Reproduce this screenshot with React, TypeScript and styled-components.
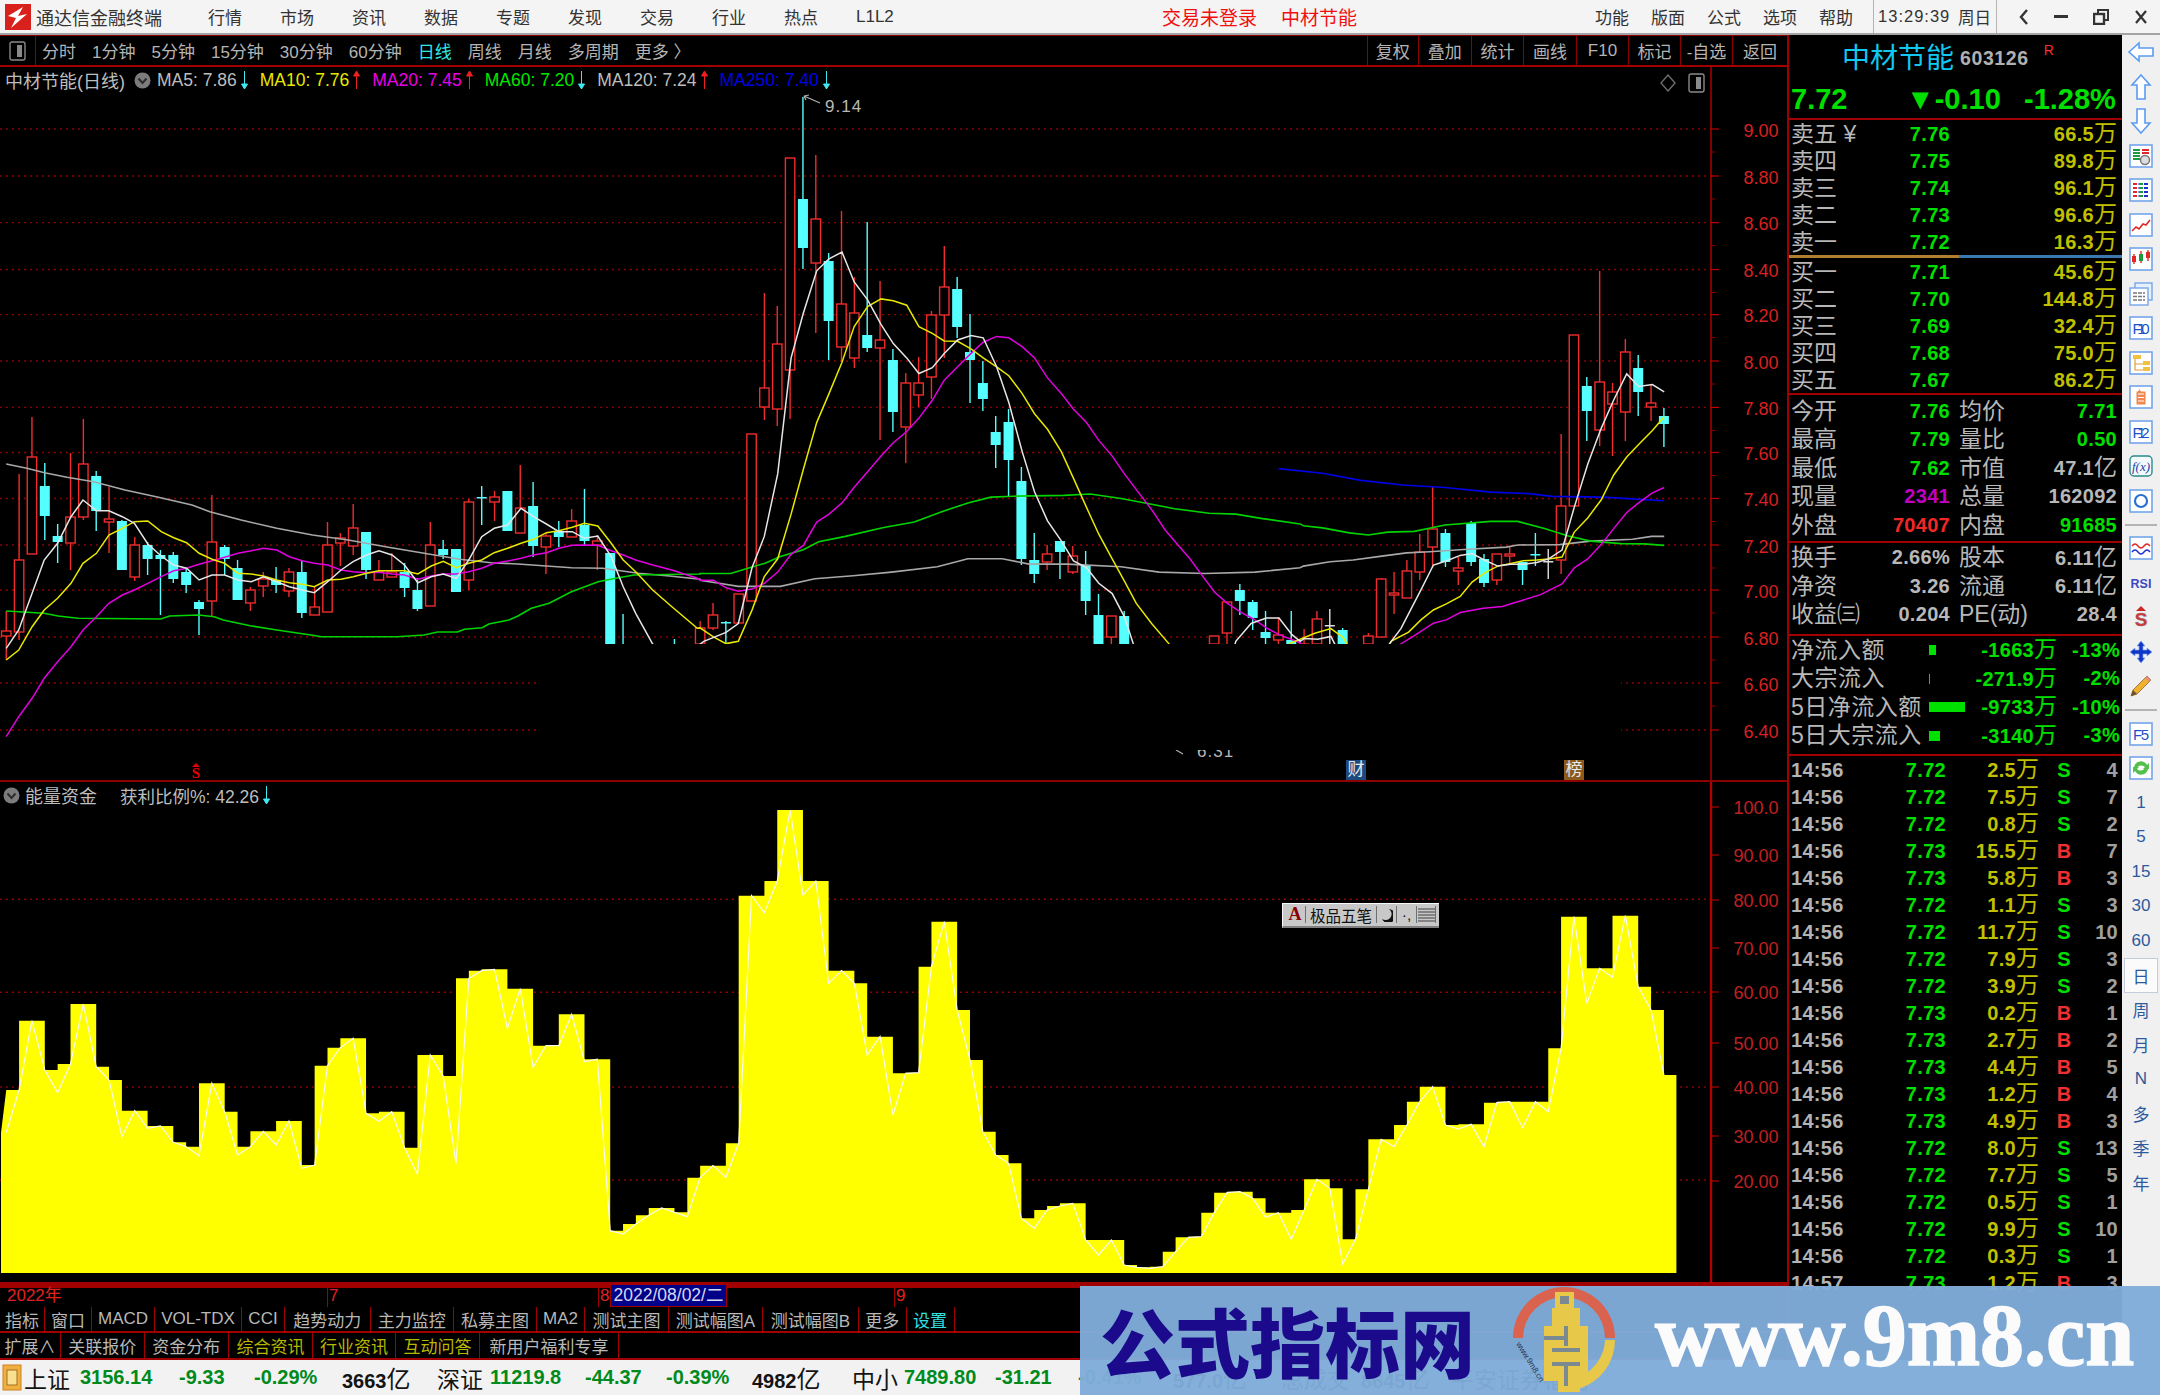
import styled, { createGlobalStyle } from 'styled-components';

const GlobalStyle = createGlobalStyle`
  html, body { margin: 0; padding: 0; background: #000; }
  * { box-sizing: border-box; }
  body { font-family: "Liberation Sans", "Noto Sans CJK SC", sans-serif; }
`;

const CJK = '"Liberation Sans", "Noto Sans CJK SC", sans-serif';

const Page = styled.div`
  position: relative;
  width: 2160px;
  height: 1395px;
  overflow: hidden;
  display: flex;
  flex-direction: column;
  background: #000;
  font-family: ${CJK};
`;

/* ---------- title bar ---------- */
const TitleBar = styled.div`
  height: 35px;
  flex: none;
  display: flex;
  align-items: center;
  background: #f4f4f4;
  border-bottom: 2px solid #a4a4a4;
  color: #333;
  font-size: 17px;
`;
const Brand = styled.span`
  font-size: 18px;
  margin-left: 5px;
  width: 172px;
`;
const MenuItem = styled.span`
  width: 72px;
  flex: none;
`;
const AlertText = styled.span<{ $ml: number }>`
  color: #f01010;
  font-size: 19px;
  margin-left: ${(p) => p.$ml}px;
`;
const RightMenu = styled.div`
  display: flex;
  gap: 22px;
  margin-left: 238px;
`;
const ClockCell = styled.div`
  width: 124px;
  height: 33px;
  margin-left: 20px;
  display: flex;
  align-items: center;
  justify-content: space-between;
  padding: 0 5px 0 4px;
  border-left: 1px solid #b4b4b4;
  border-right: 1px solid #b4b4b4;
  font-size: 16.5px;
`;
const ClockTime = styled.span`
  letter-spacing: 1px;
`;
const WinControls = styled.div`
  flex: 1;
  display: flex;
  align-items: center;
  justify-content: space-between;
  padding: 0 12px 0 22px;
`;

/* ---------- layout ---------- */
const Body = styled.div`
  flex: 1;
  min-height: 0;
  display: flex;
`;
const LeftCol = styled.div`
  width: 1787px;
  flex: none;
  display: flex;
  flex-direction: column;
`;
const Toolbar = styled.div`
  height: 32px;
  flex: none;
  display: flex;
  align-items: center;
  border-top: 1px solid #8b0000;
  border-bottom: 2px solid #a00000;
  color: #b4b4b4;
  font-size: 17px;
`;
const ToolIconCell = styled.div`
  width: 36px;
  height: 100%;
  flex: none;
  display: flex;
  align-items: center;
  justify-content: center;
  border-right: 1px solid #8b0000;
  margin-right: 6px;
`;
const PeriodList = styled.div`
  display: flex;
  gap: 16px;
`;
const Period = styled.span<{ $on?: boolean }>`
  color: ${(p) => (p.$on ? '#30e8e8' : '#b4b4b4')};
`;
const ToolRight = styled.div`
  margin-left: auto;
  height: 100%;
  display: flex;
`;
const ToolCell = styled.div<{ $w: number }>`
  width: ${(p) => p.$w}px;
  display: flex;
  align-items: center;
  justify-content: center;
  border-left: 1px solid #8b0000;
`;

const MainPane = styled.div`
  position: relative;
  height: 715px;
  flex: none;
  border-bottom: 2px solid #8b0000;
`;
const SubPane = styled.div`
  position: relative;
  height: 500px;
  flex: none;
`;
const ChartSvg = styled.svg`
  display: block;
`;
const Legend = styled.div`
  position: absolute;
  left: 5px;
  top: 3px;
  display: flex;
  align-items: center;
  height: 20px;
  font-size: 17.5px;
  color: #bdbdbd;
`;
const LegendName = styled.span<{ $w: number }>`
  width: ${(p) => p.$w}px;
  flex: none;
  font-size: 18px;
  white-space: nowrap;
`;
const LegendChevron = styled.span<{ $w: number; $ml?: number }>`
  display: flex;
  flex: none;
  width: ${(p) => p.$w}px;
  margin-left: ${(p) => p.$ml ?? 0}px;
`;
const LegendItem = styled.span<{ $c: string }>`
  display: flex;
  align-items: center;
  gap: 4px;
  margin-right: 12px;
  color: ${(p) => p.$c};
  white-space: pre;
`;
const CornerTools = styled.div`
  position: absolute;
  left: 1660px;
  top: 6px;
  display: flex;
  align-items: center;
  gap: 12px;
`;
const Badge = styled.span<{ $x: number; $bg: string }>`
  position: absolute;
  left: ${(p) => p.$x}px;
  top: 693px;
  width: 20px;
  height: 20px;
  background: ${(p) => p.$bg};
  color: #e8e8e8;
  font-size: 17px;
  line-height: 20px;
  text-align: center;
`;
const SplitMark = styled.span`
  position: absolute;
  left: 189px;
  top: 700px;
  width: 14px;
  height: 12px;
  font-family: "Liberation Serif", serif;
  font-size: 15px;
  font-weight: 700;
  line-height: 12px;
  text-align: center;
  color: #e80000;
`;
const ImeBar = styled.div`
  position: absolute;
  left: 1282px;
  top: 121px;
  width: 157px;
  height: 25px;
  display: flex;
  align-items: stretch;
  padding: 2px 2px 3px;
  background: #c8c8c8;
  border-top: 1px solid #f8f8f8;
  border-left: 1px solid #f8f8f8;
  border-bottom: 2px solid #808080;
  color: #111;
`;
const ImeBtn = styled.span<{ $w: number; $c?: string; $serif?: boolean }>`
  width: ${(p) => p.$w}px;
  flex: none;
  display: flex;
  align-items: center;
  justify-content: center;
  border-right: 1px solid #707070;
  font-family: ${(p) => (p.$serif ? '"Liberation Serif", serif' : 'inherit')};
  font-weight: ${(p) => (p.$serif ? 700 : 400)};
  font-size: ${(p) => (p.$serif ? 18 : 15.5)}px;
  color: ${(p) => p.$c || '#111'};
  white-space: nowrap;
`;

/* ---------- bottom rows ---------- */
const TimeAxis = styled.div`
  height: 25px;
  flex: none;
  display: flex;
  align-items: stretch;
  border-top: 2px solid #a00000;
  color: #e02020;
  font-size: 17px;
  background-image: linear-gradient(#a00000, #a00000);
  background-size: 1px 4px;
  background-repeat: repeat-x;
`;
const AxisCell = styled.span<{ $w: number; $mark?: boolean; $pad?: number }>`
  width: ${(p) => p.$w}px;
  flex: none;
  padding-left: ${(p) => p.$pad ?? 1}px;
  border-left: ${(p) => (p.$mark ? '1px solid #a00000' : 'none')};
  line-height: 23px;
`;
const AxisCursor = styled.span`
  width: 117px;
  flex: none;
  background: #000088;
  border: 1px solid #a00000;
  color: #d8d8f0;
  line-height: 21px;
  text-align: center;
  font-size: 17.5px;
  white-space: nowrap;
`;
const BarRow = styled.div<{ $h: number }>`
  height: ${(p) => p.$h}px;
  flex: none;
  display: flex;
  border-bottom: 2px solid #a00000;
  font-size: 17px;
`;
const BarCell = styled.span<{ $w: number; $c?: string }>`
  width: ${(p) => p.$w}px;
  flex: none;
  display: flex;
  align-items: center;
  justify-content: center;
  border-right: 1px solid #a00000;
  color: ${(p) => p.$c || '#b8b8b8'};
  white-space: nowrap;
`;

/* ---------- quote panel ---------- */
const QuotePanel = styled.div`
  width: 335px;
  flex: none;
  overflow: hidden;
  border-left: 2px solid #a00000;
  color: #b8b8b8;
`;
const NameRow = styled.div`
  height: 45px;
  display: flex;
  align-items: center;
  padding-left: 53px;
`;
const StockName = styled.span`
  font-size: 28px;
  color: #10c8f0;
  margin-top: -4px;
`;
const StockCode = styled.span`
  font-size: 19.5px;
  font-weight: 700;
  letter-spacing: 0.6px;
  color: #b0b0b0;
  margin: 2px 0 0 6px;
`;
const StockFlag = styled.span`
  font-size: 14px;
  color: #f03030;
  margin: -16px 0 0 15px;
`;
const PriceRow = styled.div`
  height: 40px;
  display: flex;
  align-items: center;
  padding-left: 2px;
  border-bottom: 2px solid #a00000;
  color: #00e000;
  font-size: 29px;
  font-weight: 700;
`;
const PriceNow = styled.span<{ $w: number }>`
  width: ${(p) => p.$w}px;
  flex: none;
  white-space: nowrap;
`;
const Book = styled.div`
  padding-left: 2px;
`;
const QuoteRow = styled.div`
  height: 27px;
  display: grid;
  grid-template-columns: 100px 59px 167px;
  align-items: center;
`;
const Label = styled.span`
  font-size: 23px;
  line-height: 27px;
  white-space: pre;
  color: #b8b8b8;
`;
const Num = styled.span<{ $c?: string }>`
  font-size: 20px;
  font-weight: 700;
  line-height: 27px;
  letter-spacing: 0.3px;
  text-align: right;
  white-space: nowrap;
  color: ${(p) => p.$c || '#00e000'};
`;
const Unit = styled.span`
  font-size: 23px;
  font-weight: 400;
  letter-spacing: 0;
`;
const SplitLine = styled.div`
  height: 3px;
  background: linear-gradient(90deg, #b08030 0 170px, #3a78b0 170px);
`;
const Section = styled.div<{ $pt?: number; $pb?: number }>`
  padding: ${(p) => p.$pt ?? 0}px 0 ${(p) => p.$pb ?? 0}px 2px;
  border-top: 2px solid #a00000;
`;
const InfoRow = styled.div`
  height: 28.5px;
  display: grid;
  grid-template-columns: 100px 59px 69px 98px;
  align-items: center;
`;
const InfoLabel = styled(Label)`
  margin-left: 9px;
`;
const FlowRow = styled.div`
  height: 28.5px;
  display: grid;
  grid-template-columns: 138px 40px 88px 63px;
  align-items: center;
`;
const FlowLabel = styled(Label)`
  letter-spacing: 0.5px;
`;
const FlowBar = styled.span<{ $w: number }>`
  display: block;
  height: 10px;
  width: ${(p) => p.$w}px;
  background: #00e000;
`;
const TickRow = styled.div`
  height: 27px;
  display: grid;
  grid-template-columns: 60px 95px 93px 50px 29px;
  align-items: center;
`;
const TickTime = styled(Num)`
  text-align: left;
  color: #b4b4b4;
`;
const TickFlag = styled(Num)`
  text-align: center;
`;

/* ---------- side rail ---------- */
const Rail = styled.div`
  flex: 1;
  background: #f0f0f0;
  display: flex;
  flex-direction: column;
  align-items: center;
`;
const RailSlot = styled.div<{ $boxed?: boolean }>`
  height: 34.5px;
  width: 34px;
  flex: none;
  display: flex;
  align-items: center;
  justify-content: center;
  color: #2c5a9c;
  font-size: 17px;
  background: ${(p) => (p.$boxed ? '#fbfbfb' : 'transparent')};
  border: ${(p) => (p.$boxed ? '1px solid #c4ccdc' : 'none')};
`;
const RailRule = styled.div`
  width: 32px;
  height: 13px;
  flex: none;
  background: linear-gradient(#b4b4b4, #b4b4b4) center / 100% 2px no-repeat;
`;

/* ---------- status bar ---------- */
const StatusBar = styled.div`
  height: 35px;
  flex: none;
  display: flex;
  align-items: center;
  padding-left: 2px;
  background: #f2f2f2;
  color: #111;
  white-space: nowrap;
`;
const StatusIcon = styled.svg`
  flex: none;
  margin-right: 2px;
`;
const StatusCell = styled.span<{ $w: number; $k?: 'name' | 'num' | 'amt' }>`
  width: ${(p) => p.$w}px;
  flex: none;
  font-size: ${(p) => (p.$k === 'name' ? 23 : 20)}px;
  font-weight: ${(p) => (p.$k === 'name' ? 400 : 700)};
  color: ${(p) => (p.$k === 'num' ? '#008a1c' : '#141414')};
`;
const StatusUnit = styled.span`
  font-size: 24px;
  font-weight: 400;
`;

/* ---------- watermark band ---------- */
const Band = styled.div`
  position: absolute;
  left: 1080px;
  right: 0;
  top: 1286px;
  bottom: 0;
  display: flex;
  align-items: center;
  background: rgba(128, 172, 217, 0.965);
`;
const BandTitle = styled.span`
  margin-left: 20px;
  width: 384px;
  flex: none;
  font-family: "Noto Sans CJK SC", sans-serif;
  font-size: 75px;
  font-weight: 900;
  line-height: 1;
  color: #1b0a8c;
  margin-top: -2px;
`;
const BandLogoSvg = styled.svg`
  margin-left: 24px;
  flex: none;
`;
const BandUrl = styled.span`
  margin-left: 35px;
  font-family: "Liberation Serif", serif;
  font-weight: 700;
  font-size: 88px;
  line-height: 1;
  color: #fbfbfb;
  -webkit-text-stroke: 1.5px #fbfbfb;
  margin-top: -10px;
  white-space: nowrap;
`;

/* ---------- data ---------- */
type P = [number, number];
const scale = (a: number[], sx: number, sy: number, x0: number, y0: number): P[] => {
  const out: P[] = [];
  for (let i = 0; i < a.length; i += 2) out.push([x0 + a[i] / sx, y0 + a[i + 1] / sy]);
  return out;
};
const c7 = (a: number[]) => scale(a, 2.24, 3, 0, 400);
const c8 = (a: number[]) => scale(a, 2.613, 2.24, 700, 90);
const c9 = (a: number[]) => scale(a, 2.613, 2.8, 1200, 250);
const merge = (...parts: P[][]) => {
  const out: P[] = [];
  parts.flat().forEach((p) => {
    if (!out.length || p[0] > out[out.length - 1][0]) out.push(p);
  });
  return out.map((p) => `${p[0].toFixed(1)},${p[1].toFixed(1)}`).join(' ');
};

const MA5 = merge(
  c7([14,745,42,690,72,580,99,480,129,430,159,350,186,300,216,332,244,332,274,350,301,370,331,432,361,468,389,495,418,505,446,540,475,525,503,525,533,540,563,545,590,530,620,545,648,560,677,570,704,578,734,545,764,510,791,485,821,465,849,452,878,465,906,495,936,548,966,530,993,522,1022,535,1050,480,1079,410,1107,385,1137,375,1167,325,1195,350,1224,372,1252,395,1282,395,1309,415,1339,408,1369,470,1396,560,1424,640,1462,732,1500,800]),
  c8([10,1235,68,1215,100,1195,136,1070,168,1000,203,860,238,600,270,500,305,405,337,378,371,363,403,430,438,470,473,525,505,568,540,600,572,635,607,622,638,590,673,560,708,550,740,555,775,620,807,700,842,810,874,900,908,965,944,1010,976,1055,1010,1070,1042,1105,1077,1128,1109,1180,1132,1240,1160,1300,1380,1300,1400,1235,1440,1195,1480,1183,1513,1183,1547,1220,1568,1235]),
  c9([272,1088,307,1090,342,1082,374,1150,480,1150,495,1103,525,1060,578,950,610,882,645,870,680,855,711,850,743,868,778,885,812,880,845,880,880,875,911,865,946,840,978,720,1013,600,1048,500,1081,420,1115,347,1146,382,1182,377,1213,397]),
);
const MA10 = merge(
  c7([14,780,42,750,72,680,99,630,129,595,159,550,186,490,216,460,244,405,274,385,301,365,331,363,361,395,389,413,418,428,446,460,475,478,503,490,533,520,563,522,590,528,620,540,648,548,677,553,704,560,734,540,764,538,791,530,821,520,849,512,878,512,906,512,936,522,966,498,993,484,1022,503,1050,490,1079,480,1107,458,1137,445,1167,430,1195,418,1224,398,1252,392,1282,382,1309,370,1339,378,1369,430,1396,480,1424,515,1462,570,1505,620,1562,685]),
  c8([0,1205,35,1225,68,1240,100,1235,136,1165,168,1090,203,1050,238,950,270,850,305,745,337,680,371,610,403,530,438,485,473,468,505,472,540,482,572,530,607,545,638,562,673,563,708,580,740,600,775,620,807,640,842,680,874,725,908,760,944,810,976,870,1010,935,1042,995,1077,1050,1109,1100,1140,1150,1180,1195,1225,1240,1260,1290,1500,1290,1540,1240]),
  c9([300,1073,342,1060,374,1085,410,1150,470,1150,500,1095,545,1070,578,1035,610,1008,645,990,680,970,711,930,743,905,778,885,812,878,845,870,880,868,911,865,946,860,978,790,1013,750,1048,700,1081,630,1115,580,1146,545,1182,505,1213,467]),
);
const MA20 = merge(
  c7([14,1010,42,950,72,895,99,835,129,785,159,740,186,690,216,650,244,610,274,585,301,570,331,550,361,530,389,512,418,505,446,493,475,482,503,472,533,460,563,452,590,445,620,450,648,470,677,482,704,490,734,495,764,510,791,515,821,518,849,517,878,522,906,525,936,538,966,528,993,522,1022,522,1050,515,1079,505,1107,490,1137,483,1167,475,1195,465,1224,458,1252,445,1282,436,1309,435,1339,436,1369,452,1396,465,1424,480,1462,495,1505,510,1562,535]),
  c8([0,1098,35,1098,68,1115,100,1123,136,1118,168,1105,203,1080,238,1040,270,1020,305,968,337,950,371,925,403,890,438,855,473,820,505,790,540,765,572,735,607,695,638,650,673,620,708,590,740,565,775,552,807,555,842,575,874,600,908,645,944,680,976,715,1010,745,1042,785,1077,820,1109,860,1140,895,1180,940,1215,985,1250,1020,1280,1050,1310,1085,1345,1125,1378,1150,1414,1170,1446,1185,1480,1205,1513,1220,1568,1238]),
  c9([280,1150,510,1150,525,1103,560,1080,610,1045,645,1035,680,1015,740,1003,790,998,845,980,890,965,946,935,978,890,1013,865,1048,825,1081,780,1115,735,1146,708,1182,680,1213,665]),
);
const MA60 = merge(
  c7([14,633,99,640,130,648,175,655,360,657,380,648,445,645,480,650,500,660,560,677,620,690,700,706,720,710,890,710,950,705,980,696,1025,696,1040,688,1080,683,1095,672,1140,660,1160,648,1190,625,1230,610,1280,575,1340,545,1370,537,1420,525,1568,522]),
  c8([0,1083,80,1083,110,1075,170,1060,210,1045,270,1030,310,1012,380,1000,480,980,560,968,630,945,700,925,760,912,820,910,950,908,1020,905,1100,915,1180,928,1240,938,1330,948,1400,950,1470,960,1568,972]),
  c9([270,772,320,778,390,792,440,798,490,790,560,788,640,770,760,760,830,760,900,780,960,800,1020,815,1100,822,1160,823,1213,827]),
);
const MA120 = merge(
  c7([14,192,60,205,100,218,150,232,210,245,280,270,350,290,430,315,470,335,540,360,620,385,700,405,780,420,870,442,950,460,1030,478,1100,488,1160,492,1280,503,1350,505,1430,520,1500,528,1568,538]),
  c8([0,1098,50,1105,100,1112,210,1112,300,1095,400,1088,500,1080,620,1068,700,1050,790,1050,860,1062,960,1062,1100,1068,1200,1080,1320,1083,1450,1080,1568,1070]),
  c9([270,885,340,873,400,868,470,858,540,848,600,845,700,838,800,832,830,826,940,825,1020,815,1130,810,1180,802,1213,802]),
);
const MA250 = merge(c9([205,612,320,625,420,645,530,658,640,665,760,678,860,682,920,690,1050,692,1130,697,1213,702]));

// i, kind, wick top, wick bottom, body top, body bottom (page pixels)
type K = [number, 'r' | 'c' | 'w', number, number, number, number];
const CANDLES: K[] = [
  [0,'r',611,660,631,636],[1,'r',474,640,560,632],[2,'r',417,554,457,554],[3,'c',463,540,486,516],[4,'c',524,563,536,542],
  [5,'r',453,570,517,543],[6,'r',419,520,464,517],[7,'c',471,531,476,511],[8,'r',487,553,519,522],[9,'c',520,570,521,570],
  [10,'r',537,581,545,577],[11,'c',542,575,545,559],[12,'c',550,615,555,559],[13,'c',552,583,555,579],[14,'c',568,593,572,585],
  [15,'c',600,635,602,609],[16,'r',495,617,542,601],[17,'c',545,575,547,559],[18,'c',560,600,568,600],[19,'r',587,611,590,603],
  [20,'r',572,597,579,586],[21,'c',567,593,580,585],[22,'r',568,597,572,591],[23,'c',561,618,572,613],[24,'r',587,615,607,615],
  [25,'r',522,612,545,612],[26,'r',533,566,538,543],[27,'r',504,555,528,546],[28,'c',532,579,532,570],[29,'r',560,580,572,580],
  [30,'r',553,577,572,577],[31,'c',563,597,572,588],[32,'c',578,611,590,609],[33,'r',522,606,545,606],[34,'c',540,559,549,555],
  [35,'c',549,592,549,592],[36,'r',499,590,502,580],[37,'c',486,525,497,498],[38,'r',491,521,497,502],[39,'c',491,531,491,531],
  [40,'r',465,533,508,533],[41,'c',482,557,506,546],[42,'r',533,574,536,547],[43,'c',521,547,532,537],[44,'r',509,537,521,537],
  [45,'c',489,545,525,541],[46,'r',535,570,541,545],[47,'c',553,644,553,644],[48,'c',614,644,644,644],[52,'c',639,644,644,644],
  [54,'r',621,644,628,644],[55,'r',603,630,615,628],[56,'c',621,644,622,623],[57,'r',594,623,594,623],[58,'r',434,601,434,601],
  [59,'r',293,420,388,407],[60,'r',306,426,344,409],[61,'r',158,419,158,370],[62,'c',97,269,199,248],[63,'r',155,333,219,263],
  [64,'c',253,360,261,321],[65,'r',211,362,304,347],[66,'r',277,368,313,358],[67,'c',222,352,335,348],[68,'r',281,440,340,348],
  [69,'c',349,432,360,412],[70,'r',373,463,383,427],[71,'r',357,407,383,395],[72,'r',311,399,315,377],[73,'r',246,358,287,315],
  [74,'c',277,338,289,327],[75,'c',314,403,352,360],[76,'c',361,411,383,399],[77,'c',416,468,432,445],[78,'c',409,497,422,460],
  [79,'c',467,565,481,559],[80,'c',533,583,560,574],[81,'r',545,570,554,562],[82,'c',541,579,541,552],[83,'r',546,574,556,572],
  [84,'c',551,615,565,601],[85,'c',594,644,615,644],[86,'r',616,644,616,637],[87,'c',611,644,616,644],[94,'r',636,644,636,644],
  [95,'r',602,644,602,633],[96,'c',584,615,590,601],[97,'c',600,630,602,618],[98,'c',611,644,632,638],[99,'r',617,644,635,640],
  [100,'c',611,644,640,644],[101,'r',629,644,644,644],[102,'r',611,644,619,644],[103,'w',609,644,625,625],[104,'c',628,644,630,644],
  [106,'r',633,644,636,644],[107,'r',578,637,579,637],[108,'r',572,614,593,595],[109,'r',560,598,571,598],[110,'r',534,580,552,572],
  [111,'r',487,568,529,547],[112,'c',529,567,533,562],[113,'r',557,585,568,571],[114,'c',521,566,523,562],[115,'c',554,587,559,583],
  [116,'r',554,585,554,580],[117,'r',546,564,554,556],[118,'c',562,585,562,570],[119,'c',533,566,554,555],[120,'w',549,579,561,561],
  [121,'r',434,574,506,560],[122,'r',335,506,335,506],[123,'c',377,441,386,411],[124,'r',271,446,382,430],[125,'r',383,456,392,404],
  [126,'r',339,441,352,412],[127,'c',355,416,368,392],[128,'r',385,421,403,407],[129,'c',408,447,416,424],
];
const cx = (i: number) => 6.25 + i * 12.85;

const PRICE_TICKS: [string, number][] = [
  ['9.00',129],['8.80',176],['8.60',222.6],['8.40',269.5],['8.20',314.6],['8.00',361],['7.80',407.4],
  ['7.60',452.5],['7.40',498.5],['7.20',545],['7.00',590],['6.80',637],['6.60',683],['6.40',730],
];
const SUB_TICKS: [string, number][] = [
  ['100.0',807],['90.00',855],['80.00',900],['70.00',948],['60.00',992],['50.00',1043],['40.00',1087],['30.00',1136],['20.00',1181],
];

const ENERGY = [
  1058,930,722,870,938,852,672,860,900,1070,992,1045,1038,1087,1100,1127,910,995,1125,1100,1054,1095,1023,1165,1155,857,803,775,1000,1024,995,1103,1182,825,888,1150,595,572,568,745,626,862,797,797,703,845,838,1352,1362,1332,1306,1284,1297,1310,1193,1157,1192,1090,347,398,303,90,345,303,610,572,610,
  825,770,1005,880,878,560,425,690,840,1055,1125,1150,1315,1345,1290,1278,1270,1380,1425,1380,1455,1462,1465,1460,1415,1372,1370,1298,1238,1235,1255,1312,1298,1378,1290,1198,1225,1452,1378,1228,1078,1100,1035,965,920,1035,1047,1033,1100,968,965,1043,965,995,805,410,670,565,592,407,620,690,885,
].map((v) => 780 + v / 3);
const energyFill = () => {
  const pts: string[] = ['1,1273', `1,${ENERGY[0]}`];
  ENERGY.forEach((y, i) => {
    if (i === ENERGY.length - 1) return;
    const top = Math.min(y, ENERGY[i + 1]);
    pts.push(`${cx(i)},${top}`, `${cx(i + 1)},${top}`);
  });
  const last = ENERGY.length - 1;
  pts.push(`${cx(last)},${ENERGY[last]}`, `${cx(last) + 12.5},${ENERGY[last]}`, `${cx(last) + 12.5},1273`);
  return pts.join(' ');
};
const energyLine = ENERGY.map((y, i) => `${cx(i)},${y}`).join(' ');

const SELL: [string, string, string][] = [
  ['卖五 ¥','7.76','66.5'],['卖四','7.75','89.8'],['卖三','7.74','96.1'],['卖二','7.73','96.6'],['卖一','7.72','16.3'],
];
const BUY: [string, string, string][] = [
  ['买一','7.71','45.6'],['买二','7.70','144.8'],['买三','7.69','32.4'],['买四','7.68','75.0'],['买五','7.67','86.2'],
];
const GREEN = '#00e000';
const GREY = '#b8b8b8';
const INFO: [string, string, string, string, string, string, string?][] = [
  ['今开','7.76',GREEN,'均价','7.71',GREEN],
  ['最高','7.79',GREEN,'量比','0.50',GREEN],
  ['最低','7.62',GREEN,'市值','47.1',GREY,'亿'],
  ['现量','2341','#c000c0','总量','162092',GREY],
  ['外盘','70407','#f02828','内盘','91685',GREEN],
];
const INFO2: [string, string, string, string, string?][] = [
  ['换手','2.66%','股本','6.11','亿'],
  ['净资','3.26','流通','6.11','亿'],
  ['收益㈢','0.204','PE(动)','28.4'],
];
const FLOW: [string, number, string, string][] = [
  ['净流入额',6.5,'-1663','-13%'],
  ['大宗流入',1.3,'-271.9','-2%'],
  ['5日净流入额',36,'-9733','-10%'],
  ['5日大宗流入',10.5,'-3140','-3%'],
];
const TICKS: [string, string, string, string, string][] = [
  ['14:56','7.72','2.5','S','4'],['14:56','7.72','7.5','S','7'],['14:56','7.72','0.8','S','2'],['14:56','7.73','15.5','B','7'],
  ['14:56','7.73','5.8','B','3'],['14:56','7.72','1.1','S','3'],['14:56','7.72','11.7','S','10'],['14:56','7.72','7.9','S','3'],
  ['14:56','7.72','3.9','S','2'],['14:56','7.73','0.2','B','1'],['14:56','7.73','2.7','B','2'],['14:56','7.73','4.4','B','5'],
  ['14:56','7.73','1.2','B','4'],['14:56','7.73','4.9','B','3'],['14:56','7.72','8.0','S','13'],['14:56','7.72','7.7','S','5'],
  ['14:56','7.72','0.5','S','1'],['14:56','7.72','9.9','S','10'],['14:56','7.72','0.3','S','1'],['14:57','7.73','1.2','B','3'],
];
const PERIODS = ['分时','1分钟','5分钟','15分钟','30分钟','60分钟','日线','周线','月线','多周期','更多 〉'];
const TOOL_RIGHT: [string, number][] = [['复权',50.5],['叠加',53.5],['统计',52],['画线',53],['F10',52],['标记',52],['-自选',52],['返回',55]];
const ROW2: [string, number, string?][] = [
  ['指标',45],['窗口',47],['MACD',63],['VOL-TDX',87],['CCI',43],['趋势动力',85.5],['主力监控',83.5],['私募主图',83],['MA2',48],
  ['测试主图',84],['测试幅图A',94],['测试幅图B',96],['更多',47.5],['设置',48,'#30e0e0'],
];
const YEL = '#b8b800';
const ROW3: [string, number, string?][] = [
  ['扩展∧',61],['关联报价',83.6],['资金分布',84.4],['综合资讯',84,YEL],['行业资讯',83,YEL],['互动问答',84,YEL],['新用户福利专享',139],
];

/* ---------- small drawings ---------- */
const Arrow = ({ up }: { up?: boolean }) => (
  <svg width="7" height="20" viewBox="0 0 7 20">
    {up ? (
      <path d="M3.5 19V4M0.5 6L3.5 1L6.5 6Z" stroke="#f02020" strokeWidth="1" fill="#f02020" />
    ) : (
      <path d="M3.5 1V16M0.5 14L3.5 19L6.5 14Z" stroke="#40e8f0" strokeWidth="1" fill="#40e8f0" />
    )}
  </svg>
);
const Chevron = () => (
  <svg width="17" height="17" viewBox="0 0 17 17">
    <circle cx="8.5" cy="8.5" r="8" fill="#7c7c7c" />
    <path d="M4.5 6.5L8.5 11L12.5 6.5" fill="none" stroke="#2c2c2c" strokeWidth="2" />
  </svg>
);
const BoxIcon = () => (
  <svg width="17" height="20" viewBox="0 0 17 20">
    <rect x="1" y="1" width="15" height="18" rx="2" fill="none" stroke="#8a8a8a" strokeWidth="1.4" />
    <rect x="8" y="4" width="5" height="12" fill="#8a8a8a" />
  </svg>
);
const LogoSvg = styled.svg`
  margin-left: 5px;
  flex: none;
`;
const Logo = () => (
  <LogoSvg width="26" height="26" viewBox="0 0 26 26">
    <rect width="26" height="26" fill="#d8201c" />
    <path d="M3 12L18 3L13 12L22 10L6 24L11 14Z" fill="#fff" />
  </LogoSvg>
);
const frame = <rect x="1" y="1" width="22" height="22" fill="#fff" stroke="#74a6ec" strokeWidth="1.6" />;
const Ico = ({ children }: { children: React.ReactNode }) => (
  <svg width="24" height="24" viewBox="0 0 24 24">{children}</svg>
);
const ArrowIco = ({ d }: { d: string }) => (
  <svg width="28" height="28" viewBox="0 0 28 28">
    <path d={d} fill="#fff" stroke="#5a9cf0" strokeWidth="1.6" />
  </svg>
);
const RAIL: React.ReactNode[] = [
  <ArrowIco d="M2 14L12 5V10H26V18H12V23Z" />,
  <ArrowIco d="M14 2L23 12H18V26H10V12H5Z" />,
  <ArrowIco d="M14 26L23 16H18V2H10V16H5Z" />,
  <Ico>{frame}<path d="M4 6h7M4 9h7M4 12h7M4 15h7" stroke="#1c9a3c" strokeWidth="2" /><path d="M13 6h7M13 9h7" stroke="#e02828" strokeWidth="2" /><circle cx="16" cy="16" r="4.5" fill="#ddd" stroke="#777" strokeWidth="1.5" /></Ico>,
  <Ico>{frame}<path d="M4 6h16M4 10h16M4 14h16M4 18h16" stroke="#2030d0" strokeWidth="2" strokeDasharray="4 1.5" /><path d="M4 6h4M4 10h4M4 14h4M4 18h4" stroke="#e02828" strokeWidth="2" /><path d="M10 6h4M10 10h4M10 14h4M10 18h4" stroke="#1c9a3c" strokeWidth="2" /></Ico>,
  <Ico>{frame}<path d="M3 18L7 14L10 16L14 11L17 12L21 7" fill="none" stroke="#e02828" strokeWidth="1.6" /></Ico>,
  <Ico>{frame}<path d="M5 7V17M12 4V16M19 3V14" stroke="#e02828" strokeWidth="1.4" /><rect x="3" y="9" width="4" height="6" fill="#e02828" /><rect x="10" y="7" width="4" height="7" fill="#1c9a3c" /><rect x="17" y="5" width="4" height="6" fill="#e02828" /></Ico>,
  <Ico><rect x="6" y="1" width="17" height="17" fill="#e8f0fc" stroke="#74a6ec" strokeWidth="1.4" /><rect x="1" y="6" width="18" height="17" fill="#fff" stroke="#74a6ec" strokeWidth="1.4" /><path d="M4 11h12M4 14.5h12M4 18h12" stroke="#777" strokeWidth="1.6" strokeDasharray="4 1" /></Ico>,
  <Ico>{frame}<text x="12" y="18" textAnchor="middle" fontSize="15" fontFamily="Liberation Sans" fill="#2050c8" textLength="17">F10</text></Ico>,
  <Ico>{frame}<path d="M6 7V19H14M6 13H14" fill="none" stroke="#e0a030" strokeWidth="1.2" /><rect x="4" y="4" width="8" height="4" fill="#f0c040" /><rect x="14" y="10" width="7" height="4" fill="#f0c040" /><rect x="14" y="16" width="7" height="4" fill="#f0c040" /></Ico>,
  <Ico>{frame}<path d="M11 3L9 6H7V20H17V6H12ZM9 9H15M9 12.5H15M9 16H15" fill="#f08850" stroke="#fff" strokeWidth="1" /></Ico>,
  <Ico>{frame}<text x="12" y="18" textAnchor="middle" fontSize="15" fontFamily="Liberation Sans" fill="#2050c8" textLength="17">F12</text></Ico>,
  <Ico><rect x="1" y="2" width="22" height="20" rx="4" fill="#f4fafa" stroke="#2a8a8a" strokeWidth="1.4" /><text x="12" y="17" textAnchor="middle" fontSize="13" fontStyle="italic" fontFamily="Liberation Serif" fill="#1840b0">f(x)</text></Ico>,
  <Ico>{frame}<circle cx="12" cy="12" r="6" fill="none" stroke="#2a70d0" strokeWidth="2.2" /></Ico>,
  null,
  <Ico>{frame}<path d="M3 10Q6 6 9 10T15 10T21 10" fill="none" stroke="#e02828" strokeWidth="1.4" /><path d="M3 16Q6 12 9 16T15 16T21 16" fill="none" stroke="#2030d0" strokeWidth="1.4" /></Ico>,
  <Ico><text x="12" y="17" textAnchor="middle" fontSize="12.5" fontWeight="700" fontFamily="Liberation Sans" fill="#3a48c0">RSI</text></Ico>,
  <Ico><path d="M12 1L17 6H7Z" fill="#c82828" /><text x="12" y="21" textAnchor="middle" fontSize="19" fontWeight="700" fontFamily="Liberation Sans" fill="#d83030" stroke="#888" strokeWidth="0.5">S</text></Ico>,
  <Ico><path d="M12 1L16 6H14V10H18V8L23 12L18 16V14H14V18H16L12 23L8 18H10V14H6V16L1 12L6 8V10H10V6H8Z" fill="#1038c8" stroke="#88a8f0" strokeWidth="0.7" /></Ico>,
  <Ico><path d="M2 22L4 16L18 2L22 6L8 20Z" fill="#f0b030" stroke="#8a6a20" strokeWidth="0.8" /><path d="M2 22L4 16L8 20Z" fill="#6a5030" /><path d="M18 2L22 6L20 8L16 4Z" fill="#e88888" /></Ico>,
  null,
  <Ico>{frame}<text x="12" y="18" textAnchor="middle" fontSize="15" fontFamily="Liberation Sans" fill="#2050c8" textLength="16">F5</text></Ico>,
  <Ico>{frame}<path d="M5 11A7 7 0 0 1 18 9L20 7V13H14L16 11A5 5 0 0 0 8 12ZM19 13A7 7 0 0 1 6 15L4 17V11H10L8 13A5 5 0 0 0 16 12Z" fill="#54c04c" /></Ico>,
];
const RAIL_TEXT = ['1','5','15','30','60','日','周','月','N','多','季','年'];

const MainChart = () => (
  <ChartSvg width="1787" height="713" viewBox="0 67 1787 713">
    {PRICE_TICKS.map(([, y]) => (
      <line key={y} x1="0" x2="1711" y1={y} y2={y} stroke="#8f0000" strokeWidth="1.4" strokeDasharray="2 4" />
    ))}
    {CANDLES.map(([i, k, wt, wb, bt, bb]) => {
      const x = cx(i);
      const color = k === 'r' ? '#f02c2c' : k === 'c' ? '#55ffff' : '#e0e0e0';
      const h = Math.max(bb - bt, 1.5);
      return (
        <g key={i}>
          <line x1={x} x2={x} y1={wt} y2={wb} stroke={color} strokeWidth="1.4" />
          {k === 'r' && <rect x={x - 4.7} y={bt} width="9.4" height={h} fill="#000" stroke={color} strokeWidth="1.4" />}
          {k === 'c' && <rect x={x - 5} y={bt} width="10" height={h} fill={color} />}
          {k === 'w' && <rect x={x - 5} y={bt} width="10" height={h} fill={color} />}
        </g>
      );
    })}
    <polyline points={MA120} fill="none" stroke="#a8a8a8" strokeWidth="1.6" />
    <polyline points={MA250} fill="none" stroke="#0000e8" strokeWidth="1.6" />
    <polyline points={MA60} fill="none" stroke="#00d400" strokeWidth="1.6" />
    <polyline points={MA20} fill="none" stroke="#e000e0" strokeWidth="1.5" />
    <polyline points={MA10} fill="none" stroke="#e8e800" strokeWidth="1.5" />
    <polyline points={MA5} fill="none" stroke="#e6e6e6" strokeWidth="1.5" />
    <rect x="538" y="644" width="1083" height="100" fill="#000" />
    <path d="M804 96L820 103M804 96L809 95M804 96L806 100" stroke="#b0b0b0" strokeWidth="1.2" fill="none" />
    <text x="825" y="112" fontSize="17" fill="#b8b8b8" letterSpacing="1" fontFamily="Liberation Sans">9.14</text>
    <text x="1197" y="757" fontSize="17" fill="#b8b8b8" letterSpacing="1" fontFamily="Liberation Sans">6.31</text>
    <path d="M1176 750L1183 754" stroke="#b0b0b0" strokeWidth="1.2" />
    <rect x="1150" y="740" width="90" height="10" fill="#000" />
    <path d="M196 763L192 767H200Z" fill="#e80000" />
    {/* price axis */}
    <line x1="1711" x2="1711" y1="67" y2="780" stroke="#a00000" strokeWidth="1.6" />
    {PRICE_TICKS.map(([t, y], i) => (
      <g key={t}>
        <line x1="1711" x2="1719" y1={y} y2={y} stroke="#c00000" strokeWidth="1.2" />
        {i < PRICE_TICKS.length - 1 && (
          <line x1="1711" x2="1715" y1={y + 23} y2={y + 23} stroke="#900000" strokeWidth="1" />
        )}
        <text x="1761" y={y + 7.5} textAnchor="middle" fontSize="18" fill="#d82020" fontFamily="Liberation Sans">{t}</text>
      </g>
    ))}
  </ChartSvg>
);

const SubChart = () => (
  <ChartSvg width="1787" height="500" viewBox="0 782 1787 500">
    {[899.3, 992.3, 1087, 1180].map((y) => (
      <line key={y} x1="0" x2="1711" y1={y} y2={y} stroke="#8f0000" strokeWidth="1.4" strokeDasharray="2 4" />
    ))}
    <polygon points={energyFill()} fill="#ffff00" />
    <polyline points={energyLine} fill="none" stroke="#f8f8f0" strokeWidth="1.2" />
    <line x1="1711" x2="1711" y1="782" y2="1282" stroke="#b00000" strokeWidth="2.4" />
    {SUB_TICKS.map(([t, y]) => (
      <g key={t}>
        <line x1="1711" x2="1719" y1={y} y2={y} stroke="#b00000" strokeWidth="1.2" />
        <text x="1756" y={y + 7} textAnchor="middle" fontSize="18" fill="#c02020" fontFamily="Liberation Sans">{t}</text>
      </g>
    ))}
  </ChartSvg>
);

const BandLogo = () => (
  <BandLogoSvg width="112" height="109" viewBox="0 0 112 109">
    <path d="M5 52A51 51 0 0 1 107 52H97A41 41 0 0 0 15 52Z" fill="#d9634f" />
    <path d="M107 54A51 51 0 0 1 70 103L67 92A41 41 0 0 0 97 54Z" fill="#e8c848" />
    <path d="M47 6H66V22H72V40H80V95H72V106H50V95H36V40H44V22H47Z" fill="#e8c848" />
    <path d="M52 10H61V18H52ZM36 50H58V54H36ZM44 62H72V66H44ZM44 76H72V80H44ZM56 40H60V60H56ZM56 80H60V100H56Z" fill="#7a8a90" />
    <text x="0" y="0" fontSize="8" fill="#2b3550" fontFamily="Liberation Sans" transform="translate(8 58) rotate(58)">www.9m8.cn</text>
  </BandLogoSvg>
);

function App() {
  return (
    <Page>
      <GlobalStyle />
      <TitleBar>
        <Logo />
        <Brand>通达信金融终端</Brand>
        {['行情','市场','资讯','数据','专题','发现','交易','行业','热点'].map((m) => (
          <MenuItem key={m}>{m}</MenuItem>
        ))}
        <MenuItem>L1L2</MenuItem>
        <AlertText $ml={234}>交易未登录</AlertText>
        <AlertText $ml={24}>中材节能</AlertText>
        <RightMenu>
          {['功能','版面','公式','选项','帮助'].map((m) => (
            <span key={m}>{m}</span>
          ))}
        </RightMenu>
        <ClockCell>
          <ClockTime>13:29:39</ClockTime>
          <span>周日</span>
        </ClockCell>
        <WinControls>
          <svg width="10" height="18" viewBox="0 0 10 18"><path d="M8 2L2 9L8 16" fill="none" stroke="#333" strokeWidth="2.4" /></svg>
          <svg width="14" height="4" viewBox="0 0 14 4"><rect width="14" height="3" fill="#333" /></svg>
          <svg width="16" height="16" viewBox="0 0 16 16"><rect x="5" y="1" width="10" height="10" fill="none" stroke="#333" strokeWidth="2" /><rect x="1" y="5" width="10" height="10" fill="#f4f4f4" stroke="#333" strokeWidth="2.4" /></svg>
          <svg width="14" height="16" viewBox="0 0 14 16"><path d="M2 2L12 14M12 2L2 14" stroke="#333" strokeWidth="2.2" /></svg>
        </WinControls>
      </TitleBar>
      <Body>
        <LeftCol>
          <Toolbar>
            <ToolIconCell><BoxIcon /></ToolIconCell>
            <PeriodList>
              {PERIODS.map((p) => (
                <Period key={p} $on={p === '日线'}>{p}</Period>
              ))}
            </PeriodList>
            <ToolRight>
              {TOOL_RIGHT.map(([t, w]) => (
                <ToolCell key={t} $w={w}>{t}</ToolCell>
              ))}
            </ToolRight>
          </Toolbar>
          <MainPane>
            <MainChart />
            <Legend>
              <LegendName $w={129}>中材节能(日线)</LegendName>
              <LegendChevron $w={23}><Chevron /></LegendChevron>
              <LegendItem $c="#bdbdbd">MA5: 7.86<Arrow /></LegendItem>
              <LegendItem $c="#e8e800">MA10: 7.76<Arrow up /></LegendItem>
              <LegendItem $c="#e800e8">MA20: 7.45<Arrow up /></LegendItem>
              <LegendItem $c="#00e800">MA60: 7.20<Arrow /></LegendItem>
              <LegendItem $c="#bdbdbd">MA120: 7.24<Arrow up /></LegendItem>
              <LegendItem $c="#0000e8">MA250: 7.40<Arrow /></LegendItem>
            </Legend>
            <CornerTools>
              <svg width="16" height="18" viewBox="0 0 16 18"><path d="M8 1L15 9L8 17L1 9Z" fill="none" stroke="#6c6c6c" strokeWidth="1.4" /></svg>
              <BoxIcon />
            </CornerTools>
            <SplitMark>S</SplitMark>
            <Badge $x={1346} $bg="#1c4a80">财</Badge>
            <Badge $x={1564} $bg="#8c5a1c">榜</Badge>
          </MainPane>
          <SubPane>
            <SubChart />
            <Legend>
              <LegendChevron $w={22} $ml={-2}><Chevron /></LegendChevron>
              <LegendName $w={95}>能量资金</LegendName>
              <LegendItem $c="#bdbdbd">获利比例%: 42.26<Arrow /></LegendItem>
            </Legend>
            <ImeBar>
              <ImeBtn $w={21} $c="#8a0000" $serif>A</ImeBtn>
              <ImeBtn $w={71}>极品五笔</ImeBtn>
              <ImeBtn $w={20}>
                <svg width="12" height="14" viewBox="0 0 12 14"><path d="M8 1A7 7 0 1 1 1 11A6 6 0 0 0 8 1Z" fill="#111" /></svg>
              </ImeBtn>
              <ImeBtn $w={20}>·,</ImeBtn>
              <ImeBtn $w={19}>
                <svg width="17" height="14" viewBox="0 0 17 14"><path d="M0 1h17M0 4h17M0 7h17M0 10h17M0 13h17" stroke="#6c6c6c" strokeWidth="1.6" /></svg>
              </ImeBtn>
            </ImeBar>
          </SubPane>
          <TimeAxis>
            <AxisCell $w={327} $pad={7}>2022年</AxisCell>
            <AxisCell $w={271} $mark>7</AxisCell>
            <AxisCell $w={12} $mark>8</AxisCell>
            <AxisCursor>2022/08/02/二</AxisCursor>
            <AxisCell $w={167} />
            <AxisCell $w={40} $mark>9</AxisCell>
          </TimeAxis>
          <BarRow $h={26}>
            {ROW2.map(([t, w, c]) => (
              <BarCell key={t} $w={w} $c={c}>{t}</BarCell>
            ))}
          </BarRow>
          <BarRow $h={27}>
            {ROW3.map(([t, w, c]) => (
              <BarCell key={t} $w={w} $c={c}>{t}</BarCell>
            ))}
          </BarRow>
        </LeftCol>
        <QuotePanel>
          <NameRow>
            <StockName>中材节能</StockName>
            <StockCode>603126</StockCode>
            <StockFlag>R</StockFlag>
          </NameRow>
          <PriceRow>
            <PriceNow $w={115}>7.72</PriceNow>
            <PriceNow $w={118}>▼-0.10</PriceNow>
            <PriceNow $w={96}>-1.28%</PriceNow>
          </PriceRow>
          <Book>
            {SELL.map(([l, p, v]) => (
              <QuoteRow key={l}>
                <Label>{l}</Label>
                <Num>{p}</Num>
                <Num $c="#c0c000">{v}<Unit>万</Unit></Num>
              </QuoteRow>
            ))}
          </Book>
          <SplitLine />
          <Book>
            {BUY.map(([l, p, v]) => (
              <QuoteRow key={l}>
                <Label>{l}</Label>
                <Num>{p}</Num>
                <Num $c="#c0c000">{v}<Unit>万</Unit></Num>
              </QuoteRow>
            ))}
          </Book>
          <Section $pt={2} $pb={1}>
            {INFO.map(([a, b, bc, c, d, dc, u]) => (
              <InfoRow key={a}>
                <Label>{a}</Label>
                <Num $c={bc}>{b}</Num>
                <InfoLabel>{c}</InfoLabel>
                <Num $c={dc}>{d}{u && <Unit>{u}</Unit>}</Num>
              </InfoRow>
            ))}
          </Section>
          <Section $pt={1} $pb={5}>
            {INFO2.map(([a, b, c, d, u]) => (
              <InfoRow key={a}>
                <Label>{a}</Label>
                <Num $c={GREY}>{b}</Num>
                <InfoLabel>{c}</InfoLabel>
                <Num $c={GREY}>{d}{u && <Unit>{u}</Unit>}</Num>
              </InfoRow>
            ))}
          </Section>
          <Section $pb={4}>
            {FLOW.map(([l, w, v, pct]) => (
              <FlowRow key={l}>
                <FlowLabel>{l}</FlowLabel>
                <FlowBar $w={w} />
                <Num>{v}<Unit>万</Unit></Num>
                <Num>{pct}</Num>
              </FlowRow>
            ))}
          </Section>
          <Section>
            {TICKS.map(([t, p, v, f, n], i) => (
              <TickRow key={i}>
                <TickTime>{t}</TickTime>
                <Num>{p}</Num>
                <Num $c="#c0c000">{v}<Unit>万</Unit></Num>
                <TickFlag $c={f === 'S' ? GREEN : '#f03030'}>{f}</TickFlag>
                <Num $c="#a0a0a0">{n}</Num>
              </TickRow>
            ))}
          </Section>
        </QuotePanel>
        <Rail>
          {RAIL.map((ico, i) =>
            ico === null ? <RailRule key={i} /> : <RailSlot key={i}>{ico}</RailSlot>,
          )}
          {RAIL_TEXT.map((t) => (
            <RailSlot key={t} $boxed={t === '日'}>{t}</RailSlot>
          ))}
        </Rail>
      </Body>
      <StatusBar>
        <StatusIcon width="20" height="27" viewBox="0 0 20 27">
          <rect x="1" y="1" width="18" height="25" fill="#f0b040" stroke="#d08020" />
          <rect x="5" y="6" width="10" height="15" fill="#f8e090" stroke="#a07020" />
        </StatusIcon>
        <StatusCell $w={56} $k="name">上证</StatusCell>
        <StatusCell $w={99} $k="num">3156.14</StatusCell>
        <StatusCell $w={75} $k="num">-9.33</StatusCell>
        <StatusCell $w={88} $k="num">-0.29%</StatusCell>
        <StatusCell $w={95} $k="amt">3663<StatusUnit>亿</StatusUnit></StatusCell>
        <StatusCell $w={53} $k="name">深证</StatusCell>
        <StatusCell $w={95} $k="num">11219.8</StatusCell>
        <StatusCell $w={81} $k="num">-44.37</StatusCell>
        <StatusCell $w={86} $k="num">-0.39%</StatusCell>
        <StatusCell $w={100} $k="amt">4982<StatusUnit>亿</StatusUnit></StatusCell>
        <StatusCell $w={52} $k="name">中小</StatusCell>
        <StatusCell $w={91} $k="num">7489.80</StatusCell>
        <StatusCell $w={83} $k="num">-31.21</StatusCell>
        <StatusCell $w={95} $k="num">-0.41%</StatusCell>
        <StatusCell $w={108} $k="amt">577.0<StatusUnit>亿</StatusUnit></StatusCell>
        <StatusCell $w={80} $k="name">总成交</StatusCell>
        <StatusCell $w={90} $k="amt">8645<StatusUnit>亿</StatusUnit></StatusCell>
        <StatusCell $w={300} $k="name">平安证券福利</StatusCell>
      </StatusBar>
      <Band>
        <BandTitle>公式指标网</BandTitle>
        <BandLogo />
        <BandUrl>www.9m8.cn</BandUrl>
      </Band>
    </Page>
  );
}

export default App;
